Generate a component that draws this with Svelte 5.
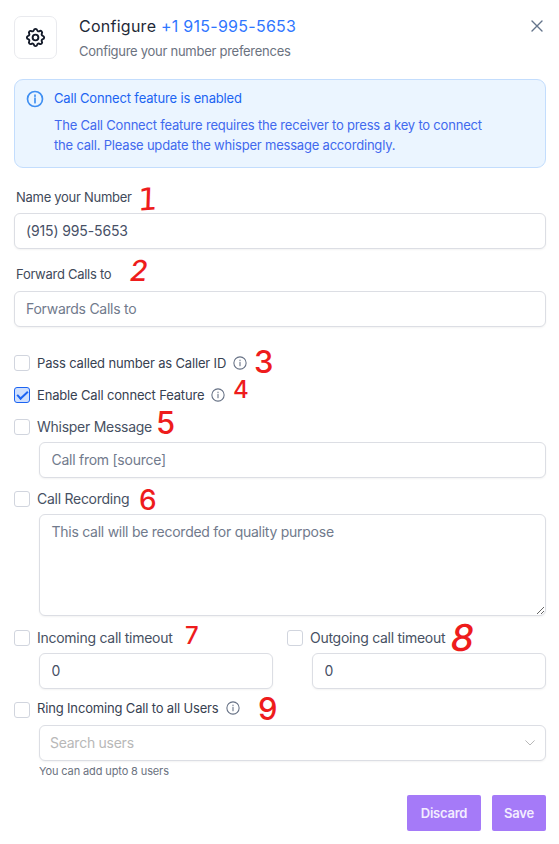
<script lang="ts">
	let name = $state('(915) 995-5653');
	let forwardTo = $state('');
	let passCallerId = $state(false);
	let callConnect = $state(true);
	let whisper = $state(false);
	let whisperText = $state('');
	let recording = $state(false);
	let recordingText = $state('');
	let incoming = $state(false);
	let incomingTimeout = $state('0');
	let outgoing = $state(false);
	let outgoingTimeout = $state('0');
	let ringAll = $state(false);
</script>

{#snippet info()}
	<svg class="info" viewBox="0 0 24 24" width="16" height="16">
		<circle cx="12" cy="12" r="9.2" />
		<path d="M12 11v5.2M12 7.4v1" />
	</svg>
{/snippet}

<div class="panel">
	<header>
		<div class="gear">
			<svg viewBox="0 0 24 24" width="23" height="23">
				<path
					d="M10.3 4.3c.4-1.75 2.95-1.75 3.4 0a1.72 1.72 0 0 0 2.57 1.07c1.54-.94 3.3.82 2.36 2.37a1.72 1.72 0 0 0 1.07 2.57c1.75.43 1.75 2.93 0 3.36a1.72 1.72 0 0 0-1.07 2.57c.94 1.54-.82 3.3-2.36 2.36a1.72 1.72 0 0 0-2.57 1.07c-.43 1.75-2.93 1.75-3.36 0a1.72 1.72 0 0 0-2.57-1.07c-1.54.94-3.3-.82-2.37-2.36a1.72 1.72 0 0 0-1.06-2.57c-1.76-.43-1.76-2.93 0-3.36a1.72 1.72 0 0 0 1.06-2.57c-.93-1.54.83-3.3 2.37-2.37 1 .6 2.3.07 2.57-1.07z"
				/>
				<circle cx="12" cy="12" r="3" />
			</svg>
		</div>
		<div class="heading">
			<h1>Configure <span>+1 915-995-5653</span></h1>
			<p>Configure your number preferences</p>
		</div>
		<button class="close" aria-label="Close">
			<svg viewBox="0 0 12 12" width="12" height="12"><path d="M1 1l10 10M11 1L1 11" /></svg>
		</button>
	</header>

	<div class="alert">
		<svg viewBox="0 0 24 24" width="20" height="20">
			<circle cx="12" cy="12" r="9" />
			<path d="M12 11v5.4M12 7.4v1.2" />
		</svg>
		<div>
			<h2>Call Connect feature is enabled</h2>
			<p>
				The Call Connect feature requires the receiver to press a key to connect<br />
				the call. Please update the whisper message accordingly.
			</p>
		</div>
	</div>

	<label class="field-label" for="name">Name your Number</label>
	<input id="name" class="field" bind:value={name} />

	<label class="field-label second" for="forward">Forward Calls to</label>
	<input id="forward" class="field" placeholder="Forwards Calls to" bind:value={forwardTo} />

	<div class="options">
		<label class="check strong">
			<input type="checkbox" bind:checked={passCallerId} />
			<span>Pass called number as Caller ID</span>
			{@render info()}
		</label>
		<label class="check strong">
			<input type="checkbox" bind:checked={callConnect} />
			<span>Enable Call connect Feature</span>
			{@render info()}
		</label>
		<label class="check">
			<input type="checkbox" bind:checked={whisper} />
			<span>Whisper Message</span>
		</label>
	</div>
	<input class="field nested" placeholder="Call from [source]" bind:value={whisperText} />

	<label class="check recording">
		<input type="checkbox" bind:checked={recording} />
		<span>Call Recording</span>
	</label>
	<textarea
		class="field nested"
		placeholder="This call will be recorded for quality purpose"
		bind:value={recordingText}
	></textarea>

	<div class="timeouts">
		<div>
			<label class="check">
				<input type="checkbox" bind:checked={incoming} />
				<span>Incoming call timeout</span>
			</label>
			<input class="field nested" bind:value={incomingTimeout} />
		</div>
		<div>
			<label class="check">
				<input type="checkbox" bind:checked={outgoing} />
				<span>Outgoing call timeout</span>
			</label>
			<input class="field nested" bind:value={outgoingTimeout} />
		</div>
	</div>

	<label class="check strong ring">
		<input type="checkbox" bind:checked={ringAll} />
		<span>Ring Incoming Call to all Users</span>
		{@render info()}
	</label>
	<div class="field nested select">
		<span>Search users</span>
		<svg viewBox="0 0 10 6" width="10" height="6"><path d="M.7.7L5 5 9.3.7" /></svg>
	</div>
	<p class="hint">You can add upto 8 users</p>

	<footer>
		<button class="discard">Discard</button>
		<button class="save">Save</button>
	</footer>

	<!-- callout numbers over the form -->
	<span class="note n1">1</span>
	<span class="note n2">2</span>
	<span class="note n3">3</span>
	<span class="note n4">4</span>
	<span class="note n5">5</span>
	<span class="note n6">6</span>
	<span class="note n7">7</span>
	<span class="note n8">8</span>
	<span class="note n9">9</span>
</div>

<style>
	:global(body) {
		background: #fff;
		overflow: hidden;
	}

	.panel {
		position: relative;
		box-sizing: border-box;
		width: 559px;
		height: 844px;
		padding: 16px 13px 0 14px;
		font-family: Inter, sans-serif;
		color: #414a5a;
	}

	.panel :is(h1, h2, p) {
		margin: 0;
		font-weight: 400;
	}

	.panel svg {
		flex: none;
		fill: none;
		stroke: currentColor;
		stroke-width: 2;
		stroke-linecap: round;
		stroke-linejoin: round;
	}

	button {
		padding: 0;
		border: 0;
		background: none;
		font: inherit;
	}

	header {
		display: flex;
		align-items: flex-start;
		height: 63px;
	}

	.gear {
		display: grid;
		place-items: center;
		box-sizing: border-box;
		width: 43px;
		height: 43px;
		padding: 0 1px 1px 0;
		border: 1px solid #e9eaee;
		border-radius: 7px;
		color: #111827;
	}

	.heading {
		flex: 1;
		padding-left: 22px;
	}

	h1 {
		font-size: 16px;
		line-height: 21px;
		letter-spacing: 0.26px;
		color: #1f2937;
	}

	h1 span {
		color: #2f76ff;
	}

	.heading p {
		margin-top: 4px;
		font-size: 13px;
		line-height: 20px;
		letter-spacing: -0.27px;
		color: #6b7280;
	}

	.close {
		display: flex;
		margin: 4px 3px 0 0;
		color: #64748b;
	}

	.close svg {
		stroke-width: 1.4;
	}

	.alert {
		display: flex;
		gap: 9px;
		box-sizing: border-box;
		height: 89px;
		padding: 8px 10px;
		border: 1px solid #c3ddfd;
		border-radius: 9px;
		background: #ebf5ff;
		color: #1c64f2;
	}

	.alert svg {
		margin-top: 1px;
		stroke: #3f8ff2;
	}

	h2 {
		font-size: 13px;
		line-height: 20px;
		letter-spacing: -0.15px;
	}

	.alert p {
		margin-top: 7px;
		font-size: 13px;
		line-height: 20px;
		letter-spacing: -0.2px;
		color: #4169ee;
		white-space: nowrap;
	}

	.field-label {
		display: block;
		margin: 19px 0 6px 2px;
		font-size: 13px;
		line-height: 20px;
		letter-spacing: -0.28px;
	}

	.field-label.second {
		margin: 15px 0 7px 2px;
	}

	.field {
		display: block;
		box-sizing: border-box;
		width: 100%;
		height: 36px;
		padding: 0 11px 1px;
		border: 1px solid #dcdee4;
		border-radius: 6px;
		outline: 0;
		background: #fff;
		box-shadow: 0 1px 2px rgba(0, 0, 0, 0.05);
		font: 14px/20px Inter, sans-serif;
		letter-spacing: -0.26px;
		color: #475066;
	}

	#name {
		letter-spacing: -0.13px;
	}

	.field::placeholder {
		color: #717a8c;
		opacity: 1;
	}

	.nested {
		width: calc(100% - 25px);
		margin-left: 25px;
		padding-left: 11.5px;
	}

	textarea.field {
		height: 102px;
		padding: 7px 11.5px;
	}

	.check {
		display: flex;
		align-items: center;
		height: 20px;
		font-size: 14px;
		letter-spacing: -0.27px;
		white-space: nowrap;
		color: #475163;
	}

	.strong {
		font-size: 13px;
		letter-spacing: -0.16px;
		color: #374151;
	}

	.check span {
		padding-bottom: 1px;
	}

	.check input {
		display: grid;
		place-items: center;
		appearance: none;
		box-sizing: border-box;
		width: 16px;
		height: 16px;
		margin: 0 7px 0 0;
		border: 1px solid #d1d5de;
		border-radius: 3px;
	}

	.check input:checked {
		border-color: #1c64f2;
		background: #cfdffd;
	}

	.check input:checked::after {
		content: '';
		width: 9px;
		height: 4px;
		margin-top: -3px;
		border: solid #1c64f2;
		border-width: 0 0 2px 2px;
		transform: rotate(-43deg);
	}

	.info {
		margin-left: 6px;
		color: #657084;
		stroke-width: 1.6 !important;
	}

	.options {
		display: grid;
		gap: 12px;
		margin: 26px 0 5px;
	}

	.recording {
		margin: 11px 0 5px;
	}

	.timeouts {
		display: grid;
		grid-template-columns: 259px 259px;
		gap: 14px;
		margin-top: 12px;
	}

	.timeouts .check {
		margin-bottom: 5px;
	}

	.ring {
		margin: 11px 0 5px;
	}

	.ring span {
		padding-bottom: 4px;
	}

	.ring .info {
		margin-top: -4px;
	}

	.select {
		display: flex;
		align-items: center;
		justify-content: space-between;
		padding: 0 10px;
		color: #b8b8b8;
	}

	.select svg {
		stroke-width: 1;
	}

	.hint {
		margin: 2px 0 0 25px !important;
		font-size: 11px;
		line-height: 16px;
		letter-spacing: -0.12px;
		color: #6b7280;
	}

	footer {
		display: flex;
		justify-content: flex-end;
		gap: 11px;
		margin-top: 16px;
	}

	footer button {
		height: 36px;
		padding-bottom: 1px;
		border-radius: 2px;
		background: #a57af8;
		font-size: 13px;
		font-weight: 600;
		letter-spacing: -0.25px;
		color: #f3edff;
	}

	.discard {
		width: 74px;
	}

	.save {
		width: 54px;
	}

	.note {
		position: absolute;
		font: 500 31px/30px Inter, sans-serif;
		color: #ee1c1c;
	}

	.n1 {
		left: 138px;
		top: 184px;
		font-family: 'DejaVu Sans', sans-serif;
		transform: skewX(-6deg) rotate(-4deg);
	}

	.n2 {
		left: 130px;
		top: 256px;
		font-size: 29px;
		transform: skewX(-10deg);
	}

	.n3 {
		left: 254px;
		top: 347px;
	}

	.n4 {
		left: 233px;
		top: 375px;
		font-size: 24px;
	}

	.n5 {
		left: 156px;
		top: 408px;
	}

	.n6 {
		left: 139px;
		top: 485px;
		font-size: 28px;
	}

	.n7 {
		left: 185px;
		top: 621px;
		font-size: 24px;
	}

	.n8 {
		left: 451px;
		top: 623px;
		font-size: 37px;
		transform: skewX(-10deg);
	}

	.n9 {
		left: 258px;
		top: 694px;
	}
</style>
